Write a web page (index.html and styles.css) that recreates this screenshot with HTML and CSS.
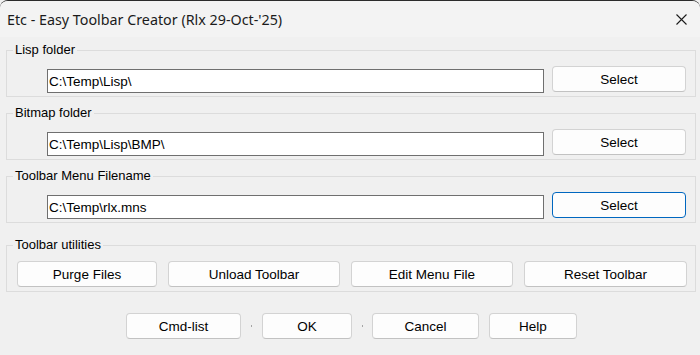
FILE: index.html
```html
<!DOCTYPE html>
<html lang="en">
<head>
    <meta charset="UTF-8">
    <meta name="viewport" content="width=device-width, initial-scale=1.0">
    <title>Easy Toolbar Creator</title>
    <link rel="stylesheet" href="styles.css">
</head>
<body>
    <div class="window">
        <!-- Title bar -->
        <div class="titlebar">
            <span class="title">Etc - Easy Toolbar Creator (Rlx 29-Oct-'25)</span>
            <svg class="close" width="11" height="11" viewBox="0 0 11 11">
                <path d="M0.5 0.5 L10.5 10.5 M10.5 0.5 L0.5 10.5" stroke="#1b1b1b" stroke-width="1.1" fill="none"/>
            </svg>
        </div>

        <div class="content">
            <div class="group">
                <span class="group-title">Lisp folder</span>
                <div class="path-row">
                    <input class="path-input" type="text" value="C:\Temp\Lisp\">
                    <button class="btn select-btn">Select</button>
                </div>
            </div>

            <div class="group">
                <span class="group-title">Bitmap folder</span>
                <div class="path-row">
                    <input class="path-input" type="text" value="C:\Temp\Lisp\BMP\">
                    <button class="btn select-btn">Select</button>
                </div>
            </div>

            <div class="group">
                <span class="group-title">Toolbar Menu Filename</span>
                <div class="path-row">
                    <input class="path-input" type="text" value="C:\Temp\rlx.mns">
                    <button class="btn select-btn focused">Select</button>
                </div>
            </div>

            <div class="group utilities">
                <span class="group-title">Toolbar utilities</span>
                <div class="util-row">
                    <button class="btn util-purge">Purge Files</button>
                    <button class="btn util-unload">Unload Toolbar</button>
                    <button class="btn util-edit">Edit Menu File</button>
                    <button class="btn util-reset">Reset Toolbar</button>
                </div>
            </div>

            <!-- Dialog buttons -->
            <div class="dialog-row">
                <button class="btn dlg-cmd">Cmd-list</button>
                <span class="spacer-dot"></span>
                <button class="btn dlg-ok">OK</button>
                <span class="spacer-dot"></span>
                <button class="btn dlg-cancel">Cancel</button>
                <button class="btn dlg-help">Help</button>
            </div>
        </div>
    </div>
</body>
</html>
```

FILE: styles.css
```css
/* General Styling */
body {
    margin: 0;
    padding: 0;
    background: #f0f0f0;
    font-family: "Liberation Sans", Arial, sans-serif;
}

.window {
    width: 700px;
    height: 355px;
    box-sizing: border-box;
    border-top: 1px solid #2b2b2b;
    border-radius: 8px 8px 0 0;
    background: #f0f0f0;
    overflow: hidden;
}

/* Title bar */
.titlebar {
    height: 36px;
    display: flex;
    align-items: center;
    justify-content: space-between;
    padding: 0 13px 0 7px;
    background: #f3f3f3;
}

.title {
    font-family: "Noto Sans", "Open Sans", sans-serif;
    font-size: 14.3px;
    color: #1b1b1b;
    margin-top: 1px;
}

.close {
    display: block;
}

/* Group boxes */
.content {
    padding: 13px 4px 0 6px;
}

.group {
    display: flex;
    flex-direction: column;
    border: 1px solid #dcdcdc;
    margin-bottom: 16px;
    height: 47px;
    box-sizing: border-box;
}

.group-title {
    align-self: flex-start;
    margin: -9px 0 0 6px;
    padding: 0 2px;
    background: #f0f0f0;
    font-size: 13px;
    line-height: 16px;
    color: #000;
}

.path-row {
    display: flex;
    align-items: flex-start;
    gap: 8px;
    padding-left: 40px;
    margin-top: 8px;
}

.path-input {
    width: 497px;
    height: 24px;
    box-sizing: border-box;
    margin: 3px 0 0 0;
    padding: 0 1px;
    border: 1px solid #6f6f6f;
    background: #fff;
    font-family: "Liberation Sans", Arial, sans-serif;
    font-size: 13.5px;
    color: #000;
    outline: none;
}

/* Buttons */
.btn {
    height: 26px;
    box-sizing: border-box;
    padding: 0;
    border: 1px solid #d3d3d3;
    border-bottom-color: #c2c2c2;
    border-radius: 4px;
    background: #fdfdfd;
    font-family: "Liberation Sans", Arial, sans-serif;
    font-size: 13.5px;
    color: #000;
}

.select-btn {
    width: 134px;
}

.select-btn.focused {
    border-color: #0067c0;
}

.utilities {
    margin-top: 22px;
}

.util-row {
    display: flex;
    gap: 11px;
    padding-left: 10px;
    margin-top: 8px;
}

.util-purge { width: 140px; }
.util-unload { width: 172px; }
.util-edit { width: 162px; }
.util-reset { width: 163px; }

.dialog-row {
    display: flex;
    align-items: center;
    padding-left: 120px;
    margin-top: 21px;
}

.dlg-cmd { width: 115px; }
.dlg-ok { width: 90px; }
.dlg-cancel { width: 107px; }
.dlg-help { width: 88px; margin-left: 10px; }

.spacer-dot {
    width: 1px;
    height: 2px;
    background: #a5a5a5;
    margin: 0 10px;
}

.dlg-ok + .spacer-dot {
    margin-right: 9px;
}
```
